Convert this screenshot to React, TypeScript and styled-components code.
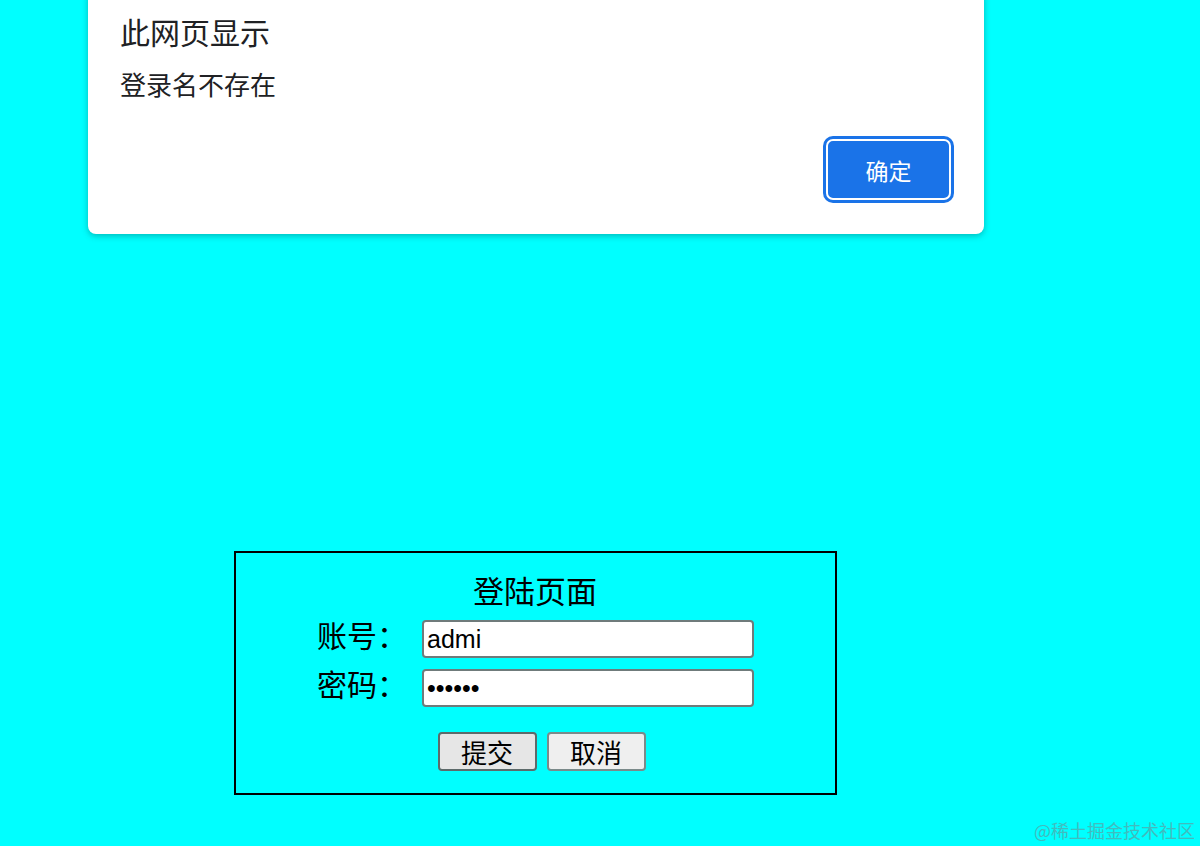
import React from 'react';
import styled, { createGlobalStyle } from 'styled-components';

const GlobalStyle = createGlobalStyle`
  html, body {
    margin: 0;
    padding: 0;
    background: #00ffff;
  }
  body {
    font-family: "Liberation Sans", "Noto Sans CJK SC", sans-serif;
    overflow: hidden;
  }
`;

const Page = styled.div`
  position: relative;
  width: 1200px;
  height: 846px;
  background: #00ffff;
  box-sizing: border-box;
  padding: 551px 0 0 234px;
`;

const Dialog = styled.div`
  position: absolute;
  top: -12px;
  left: 88px;
  width: 896px;
  height: 246px;
  box-sizing: border-box;
  background: #fff;
  border-radius: 8px;
  box-shadow: 0 2px 6px rgba(0, 60, 60, 0.35);
  padding: 25px 32px 0 32px;
  display: flex;
  flex-direction: column;
  color: #202124;
  font-family: "Noto Sans CJK SC", "Liberation Sans", sans-serif;
`;

const DialogTitle = styled.div`
  font-size: 30px;
  line-height: 36px;
`;

const DialogMessage = styled.div`
  margin-top: 19px;
  font-size: 26px;
  line-height: 32px;
`;

const DialogFooter = styled.div`
  margin-top: auto;
  display: flex;
  justify-content: flex-end;
  padding: 0 1px 34px 0;
`;

const OkButton = styled.button`
  width: 125px;
  height: 61px;
  box-sizing: border-box;
  background: #1a73e8;
  color: #fff;
  border: 2px solid #fff;
  border-radius: 7px;
  box-shadow: 0 0 0 3px #1a73e8;
  font-family: "Noto Sans CJK SC", sans-serif;
  font-size: 23px;
  padding: 0;
`;

const LoginBox = styled.form`
  width: 603px;
  height: 244px;
  box-sizing: border-box;
  border: 2px solid #000;
  display: flex;
  flex-direction: column;
  align-items: center;
  padding-top: 15px;
  font-family: "Noto Sans CJK SC", sans-serif;
`;

const LoginTitle = styled.div`
  font-size: 31px;
  line-height: 44px;
  color: #000;
  margin: 0 0 8px -1px;
`;

const FieldRow = styled.div`
  display: flex;
  align-items: center;
  height: 38px;
  & + & {
    margin-top: 11px;
  }
`;

const FieldLabel = styled.label`
  width: 90px;
  margin-right: 15px;
  padding-bottom: 10px;
  font-size: 30px;
  line-height: 38px;
  white-space: nowrap;
  color: #000;
`;

const TextInput = styled.input`
  width: 332px;
  height: 38px;
  box-sizing: border-box;
  border: 2px solid #6f7b7b;
  border-radius: 4px;
  background: #fff;
  padding: 0 3px;
  font-family: "Liberation Sans", Arial, sans-serif;
  font-size: 25px;
  color: #000;
  outline: none;
`;

const ButtonRow = styled.div`
  display: flex;
  gap: 10px;
  margin-top: 25px;
  margin-left: 12px;
`;

const FormButton = styled.button<{ $focused?: boolean }>`
  width: 99px;
  height: 39px;
  box-sizing: border-box;
  border: 2px solid ${props => (props.$focused ? '#5d6a6a' : '#7b8a8a')};
  border-radius: 4px;
  background: ${props => (props.$focused ? '#e6e6e6' : '#efefef')};
  font-family: "Noto Sans CJK SC", sans-serif;
  font-size: 26px;
  line-height: 34px;
  color: #000;
  padding: 0;
`;

const Watermark = styled.div`
  position: absolute;
  right: 5px;
  bottom: 6px;
  font-family: "Noto Sans CJK SC", sans-serif;
  font-size: 18px;
  line-height: 20px;
  color: #40bcbe;
`;

const LoginForm: React.FC = () => (
  <LoginBox onSubmit={e => e.preventDefault()}>
    <LoginTitle>登陆页面</LoginTitle>
    <FieldRow>
      <FieldLabel>账号：</FieldLabel>
      <TextInput type="text" defaultValue="admi" />
    </FieldRow>
    <FieldRow>
      <FieldLabel>密码：</FieldLabel>
      <TextInput type="password" defaultValue="123456" />
    </FieldRow>
    <ButtonRow>
      <FormButton type="submit" $focused>提交</FormButton>
      <FormButton type="button">取消</FormButton>
    </ButtonRow>
  </LoginBox>
);

const App: React.FC = () => (
  <>
    <GlobalStyle />
    <Page>
      <LoginForm />
      <Dialog>
        <DialogTitle>此网页显示</DialogTitle>
        <DialogMessage>登录名不存在</DialogMessage>
        <DialogFooter>
          <OkButton type="button">确定</OkButton>
        </DialogFooter>
      </Dialog>
      <Watermark>@稀土掘金技术社区</Watermark>
    </Page>
  </>
);

export default App;
